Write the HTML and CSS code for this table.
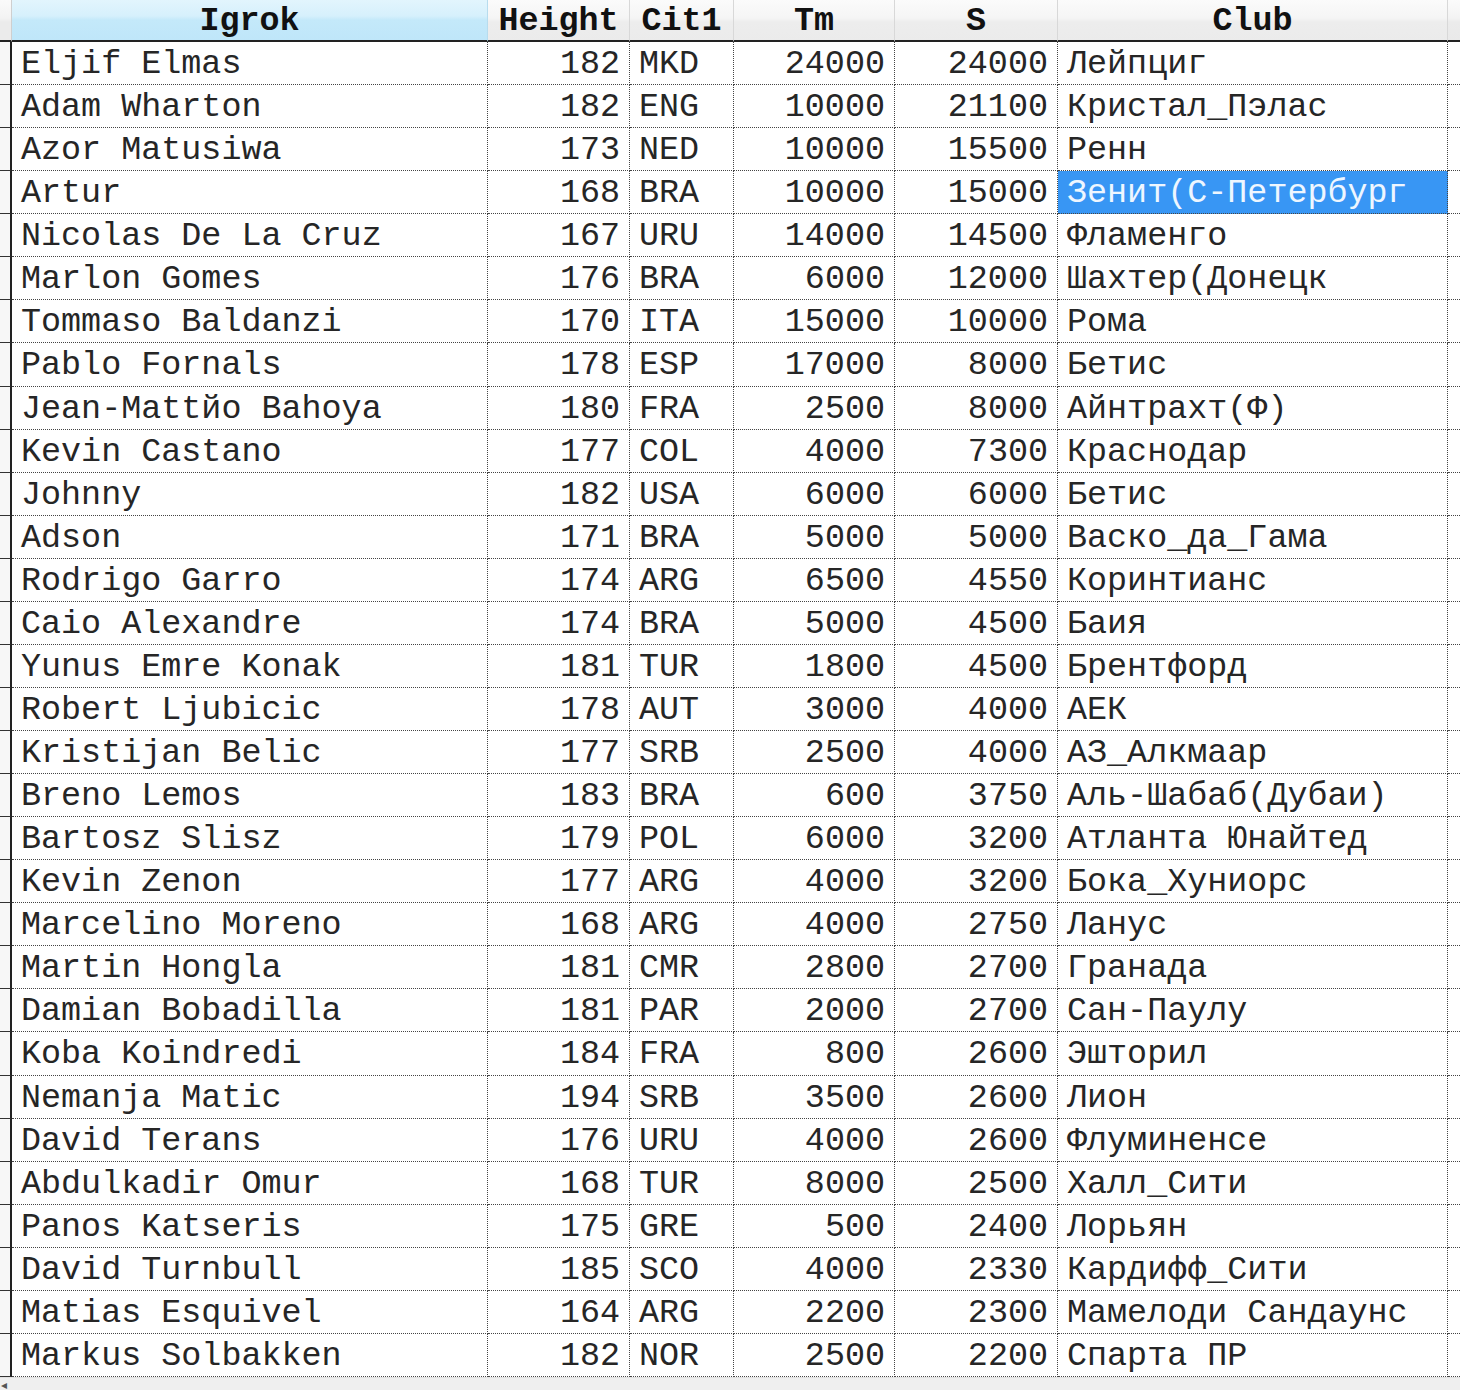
FILE: index.html
```html
<!DOCTYPE html>
<html>
<head>
<meta charset="utf-8">
<link rel="stylesheet" href="styles.css">
</head>
<body>
<div class="sheet">
  <div class="corner"></div>
  <div class="hc active">Igrok</div>
  <div class="hc">Height</div>
  <div class="hc">Cit1</div>
  <div class="hc">Tm</div>
  <div class="hc">S</div>
  <div class="hc">Club</div>
  <div class="hfill"></div>

  <div class="rh"></div><div class="c">Eljif Elmas</div><div class="c n">182</div><div class="c">MKD</div><div class="c n">24000</div><div class="c n">24000</div><div class="c">Лейпциг</div><div class="f"></div>
  <div class="rh"></div><div class="c">Adam Wharton</div><div class="c n">182</div><div class="c">ENG</div><div class="c n">10000</div><div class="c n">21100</div><div class="c">Кристал_Пэлас</div><div class="f"></div>
  <div class="rh"></div><div class="c">Azor Matusiwa</div><div class="c n">173</div><div class="c">NED</div><div class="c n">10000</div><div class="c n">15500</div><div class="c">Ренн</div><div class="f"></div>
  <div class="rh"></div><div class="c">Artur</div><div class="c n">168</div><div class="c">BRA</div><div class="c n">10000</div><div class="c n">15000</div><div class="c sel">Зенит(С-Петербург</div><div class="f"></div>
  <div class="rh"></div><div class="c">Nicolas De La Cruz</div><div class="c n">167</div><div class="c">URU</div><div class="c n">14000</div><div class="c n">14500</div><div class="c">Фламенго</div><div class="f"></div>
  <div class="rh"></div><div class="c">Marlon Gomes</div><div class="c n">176</div><div class="c">BRA</div><div class="c n">6000</div><div class="c n">12000</div><div class="c">Шахтер(Донецк</div><div class="f"></div>
  <div class="rh"></div><div class="c">Tommaso Baldanzi</div><div class="c n">170</div><div class="c">ITA</div><div class="c n">15000</div><div class="c n">10000</div><div class="c">Рома</div><div class="f"></div>
  <div class="rh"></div><div class="c">Pablo Fornals</div><div class="c n">178</div><div class="c">ESP</div><div class="c n">17000</div><div class="c n">8000</div><div class="c">Бетис</div><div class="f"></div>
  <div class="rh"></div><div class="c">Jean-Mattйo Bahoya</div><div class="c n">180</div><div class="c">FRA</div><div class="c n">2500</div><div class="c n">8000</div><div class="c">Айнтрахт(Ф)</div><div class="f"></div>
  <div class="rh"></div><div class="c">Kevin Castano</div><div class="c n">177</div><div class="c">COL</div><div class="c n">4000</div><div class="c n">7300</div><div class="c">Краснодар</div><div class="f"></div>
  <div class="rh"></div><div class="c">Johnny</div><div class="c n">182</div><div class="c">USA</div><div class="c n">6000</div><div class="c n">6000</div><div class="c">Бетис</div><div class="f"></div>
  <div class="rh"></div><div class="c">Adson</div><div class="c n">171</div><div class="c">BRA</div><div class="c n">5000</div><div class="c n">5000</div><div class="c">Васко_да_Гама</div><div class="f"></div>
  <div class="rh"></div><div class="c">Rodrigo Garro</div><div class="c n">174</div><div class="c">ARG</div><div class="c n">6500</div><div class="c n">4550</div><div class="c">Коринтианс</div><div class="f"></div>
  <div class="rh"></div><div class="c">Caio Alexandre</div><div class="c n">174</div><div class="c">BRA</div><div class="c n">5000</div><div class="c n">4500</div><div class="c">Баия</div><div class="f"></div>
  <div class="rh"></div><div class="c">Yunus Emre Konak</div><div class="c n">181</div><div class="c">TUR</div><div class="c n">1800</div><div class="c n">4500</div><div class="c">Брентфорд</div><div class="f"></div>
  <div class="rh"></div><div class="c">Robert Ljubicic</div><div class="c n">178</div><div class="c">AUT</div><div class="c n">3000</div><div class="c n">4000</div><div class="c">АЕК</div><div class="f"></div>
  <div class="rh"></div><div class="c">Kristijan Belic</div><div class="c n">177</div><div class="c">SRB</div><div class="c n">2500</div><div class="c n">4000</div><div class="c">АЗ_Алкмаар</div><div class="f"></div>
  <div class="rh"></div><div class="c">Breno Lemos</div><div class="c n">183</div><div class="c">BRA</div><div class="c n">600</div><div class="c n">3750</div><div class="c">Аль-Шабаб(Дубаи)</div><div class="f"></div>
  <div class="rh"></div><div class="c">Bartosz Slisz</div><div class="c n">179</div><div class="c">POL</div><div class="c n">6000</div><div class="c n">3200</div><div class="c">Атланта Юнайтед</div><div class="f"></div>
  <div class="rh"></div><div class="c">Kevin Zenon</div><div class="c n">177</div><div class="c">ARG</div><div class="c n">4000</div><div class="c n">3200</div><div class="c">Бока_Хуниорс</div><div class="f"></div>
  <div class="rh"></div><div class="c">Marcelino Moreno</div><div class="c n">168</div><div class="c">ARG</div><div class="c n">4000</div><div class="c n">2750</div><div class="c">Ланус</div><div class="f"></div>
  <div class="rh"></div><div class="c">Martin Hongla</div><div class="c n">181</div><div class="c">CMR</div><div class="c n">2800</div><div class="c n">2700</div><div class="c">Гранада</div><div class="f"></div>
  <div class="rh"></div><div class="c">Damian Bobadilla</div><div class="c n">181</div><div class="c">PAR</div><div class="c n">2000</div><div class="c n">2700</div><div class="c">Сан-Паулу</div><div class="f"></div>
  <div class="rh"></div><div class="c">Koba Koindredi</div><div class="c n">184</div><div class="c">FRA</div><div class="c n">800</div><div class="c n">2600</div><div class="c">Эшторил</div><div class="f"></div>
  <div class="rh"></div><div class="c">Nemanja Matic</div><div class="c n">194</div><div class="c">SRB</div><div class="c n">3500</div><div class="c n">2600</div><div class="c">Лион</div><div class="f"></div>
  <div class="rh"></div><div class="c">David Terans</div><div class="c n">176</div><div class="c">URU</div><div class="c n">4000</div><div class="c n">2600</div><div class="c">Флуминенсе</div><div class="f"></div>
  <div class="rh"></div><div class="c">Abdulkadir Omur</div><div class="c n">168</div><div class="c">TUR</div><div class="c n">8000</div><div class="c n">2500</div><div class="c">Халл_Сити</div><div class="f"></div>
  <div class="rh"></div><div class="c">Panos Katseris</div><div class="c n">175</div><div class="c">GRE</div><div class="c n">500</div><div class="c n">2400</div><div class="c">Лорьян</div><div class="f"></div>
  <div class="rh"></div><div class="c">David Turnbull</div><div class="c n">185</div><div class="c">SCO</div><div class="c n">4000</div><div class="c n">2330</div><div class="c">Кардифф_Сити</div><div class="f"></div>
  <div class="rh"></div><div class="c">Matias Esquivel</div><div class="c n">164</div><div class="c">ARG</div><div class="c n">2200</div><div class="c n">2300</div><div class="c">Мамелоди Сандаунс</div><div class="f"></div>
  <div class="rh"></div><div class="c">Markus Solbakken</div><div class="c n">182</div><div class="c">NOR</div><div class="c n">2500</div><div class="c n">2200</div><div class="c">Спарта ПР</div><div class="f"></div>

  <div class="scroll"><span class="arrow">&#9666;</span></div>
</div>
</body>
</html>
```
FILE: styles.css
```css
* { box-sizing: border-box; }
html, body {
  margin: 0;
  padding: 0;
  background: #ffffff;
}
body {
  width: 1460px;
  height: 1390px;
  overflow: hidden;
  font-family: "Liberation Mono", "DejaVu Sans Mono", monospace;
  font-size: 33.4px;
  color: #262626;
}
.sheet {
  display: grid;
  grid-template-columns: 12px 476px 142px 104px 161px 163px 390px 12px;
  grid-template-rows: 42px repeat(31, 43.07px) 1fr;
  height: 1390px;
}
.corner {
  background: linear-gradient(#fafafa 0%, #f3f3f3 45%, #ebebeb 55%, #ebebeb 100%);
  border-right: 1px solid #cfcfcf;
  border-bottom: 2px solid #222;
}
.hc {
  display: flex;
  align-items: center;
  justify-content: center;
  font-weight: bold;
  color: #111;
  white-space: pre;
  background: linear-gradient(#fbfbfb 0%, #f5f5f5 45%, #ededed 55%, #ebebeb 100%);
  border-right: 1px solid #d8d8d8;
  border-bottom: 2px solid #222;
  padding-top: 1px;
}
.hc.active {
  background: linear-gradient(#e2f5fd 0%, #d6f0fc 40%, #c4e9fa 50%, #bfe6f9 100%);
  border-right-color: #b7dcee;
}
.hfill {
  background: linear-gradient(#fbfbfb 0%, #f3f3f3 45%, #ebebeb 55%, #e9e9e9 100%);
  border-bottom: 2px solid #222;
}
.rh {
  background: #f7f7f7;
  border-right: 2px solid #222;
  border-bottom: 1px solid #333;
}
.c {
  display: flex;
  align-items: center;
  white-space: pre;
  padding-left: 9px;
  padding-top: 2px;
  border-right: 1px dotted #444;
  border-bottom: 1px dotted #444;
  overflow: hidden;
}
.c.n {
  justify-content: flex-end;
  padding-left: 0;
  padding-right: 9px;
}
.c.sel {
  background: #3896f4;
  color: #eef6ff;
}
.f {
  border-bottom: 1px dotted #444;
}
.scroll {
  grid-column: 1 / -1;
  background: #efefef;
  border-top: 1px solid #e2e2e2;
  position: relative;
}
.arrow {
  position: absolute;
  left: 1px;
  top: 1px;
  font-family: "DejaVu Sans", sans-serif;
  font-size: 12px;
  line-height: 12px;
  color: #555;
}
```
